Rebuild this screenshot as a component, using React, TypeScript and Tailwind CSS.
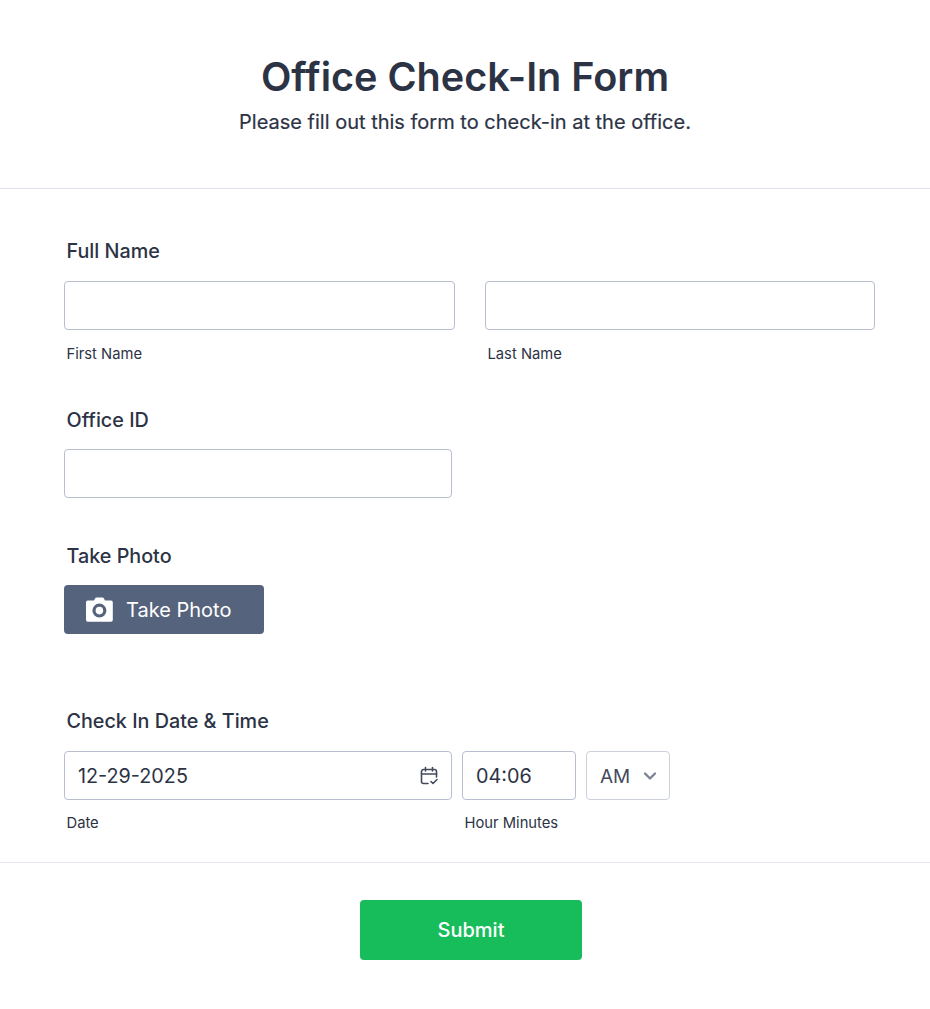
import { ChevronDown } from 'lucide-react'

function Label({ children }: { children: React.ReactNode }) {
  return <div className="ml-[2.5px] text-[19.75px] leading-[28px] font-medium text-[#2c3345]">{children}</div>
}

function Sub({ className = 'mt-[14px]', children }: { className?: string; children: React.ReactNode }) {
  return <div className={`ml-[2.5px] text-[14.75px] leading-[20px] text-[#2c3345] whitespace-nowrap ${className}`}>{children}</div>
}

function Box({ className = '', children }: { className?: string; children?: React.ReactNode }) {
  return (
    <div className={`h-[49px] rounded border border-[#b8bdd0] bg-white flex items-center text-[19.8px] text-[#2c3345] ${className}`}>
      {children}
    </div>
  )
}

function CalendarCheck() {
  return (
    <svg width="20" height="20" viewBox="0 0 20 20" fill="none" stroke="#454b5c" strokeWidth="1.6" strokeLinecap="round" strokeLinejoin="round">
      <path d="M9 17.5H4.5A2 2 0 0 1 2.5 15.5V5.5A2 2 0 0 1 4.5 3.5H15.5A2 2 0 0 1 17.5 5.5V11" />
      <path d="M6.5 1.5V5M13.5 1.5V5M2.5 8H17.5" />
      <path d="M12 15.5L14 17.5L18 13.5" />
    </svg>
  )
}

function Camera() {
  return (
    <svg width="28" height="25" viewBox="0 0 28 25" className="shrink-0">
      <path
        fill="#fff"
        fillRule="evenodd"
        d="M8 3.5L9.2 1.2Q9.6 .5 10.4 .5H16.6Q17.4 .5 17.8 1.2L19 3.5H25Q26.8 3.5 26.8 5.3V23Q26.8 24.8 25 24.8H1.8Q0 24.8 0 23V5.3Q0 3.5 1.8 3.5ZM13.4 6.6A7 7 0 1 0 13.4 20.6A7 7 0 1 0 13.4 6.6ZM13.4 9.8A3.8 3.8 0 1 1 13.4 17.4A3.8 3.8 0 1 1 13.4 9.8Z"
      />
    </svg>
  )
}

export default function App() {
  return (
    <div className="w-[930px] h-[1009px] bg-white font-['Inter',sans-serif] text-[#2c3345] overflow-hidden">
      <header className="h-[189px] border-b border-[#dfe1ec] flex flex-col items-center pt-[52px]">
        <h1 className="text-[39.6px] leading-[50px] font-semibold">Office Check-In Form</h1>
        <p className="mt-[6px] text-[20px] leading-[28px] font-normal [-webkit-text-stroke:0.2px_#2c3345]">Please fill out this form to check-in at the office.</p>
      </header>

      <main className="pl-[64px] pt-[48px]">
        <section>
          <Label>Full Name</Label>
          <div className="mt-[16px] flex gap-[30px]">
            <div className="w-[391px]">
              <Box />
              <Sub>First Name</Sub>
            </div>
            <div className="w-[390px]">
              <Box />
              <Sub>Last Name</Sub>
            </div>
          </div>
        </section>

        <section className="mt-[42px]">
          <Label>Office ID</Label>
          <Box className="mt-[15px] w-[388px]" />
        </section>

        <section className="mt-[44px]">
          <Label>Take Photo</Label>
          <button className="mt-[15px] h-[49px] w-[200px] rounded bg-[#56637d] flex items-center pl-[22px] gap-[12px] text-white text-[20px]">
            <Camera />
            Take Photo
          </button>
        </section>

        <section className="mt-[73px]">
          <Label>Check In Date &amp; Time</Label>
          <div className="mt-[16px] flex gap-[10px]">
            <div className="w-[388px]">
              <Box className="pl-[13px] pr-[12px] justify-between">
                <span className="pt-[2px]">12-29-2025</span>
                <CalendarCheck />
              </Box>
              <Sub className="mt-[13px]">Date</Sub>
            </div>
            <div className="w-[114px]">
              <Box className="pl-[13px]">
                <span className="pt-[2px]">04:06</span>
              </Box>
              <Sub className="mt-[13px]">Hour Minutes</Sub>
            </div>
            <Box className="w-[84px] pl-[13px] gap-[10px] border-[#ccd0da] text-[19px] text-[#454b5c]">
              <span className="pt-[3px]">AM</span>
              <ChevronDown size={20} strokeWidth={2.8} className="text-[#7c8293]" />
            </Box>
          </div>
        </section>
      </main>

      <footer className="mt-[29px] border-t border-[#e3e5f0] flex justify-center pt-[37px] pl-[12px]">
        <button className="w-[222px] h-[60px] rounded bg-[#18bd5b] text-white text-[20px] font-medium">Submit</button>
      </footer>
    </div>
  )
}
